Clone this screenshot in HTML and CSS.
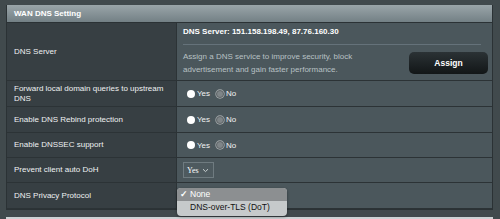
FILE: index.html
```html
<!DOCTYPE html>
<html lang="en">
<head>
  <meta charset="UTF-8">
  <title>WAN DNS Setting</title>
  <link rel="stylesheet" href="styles.css">
</head>
<body>
  <div class="panel">
    <div class="panel-title">WAN DNS Setting</div>

    <div class="row row-dns">
      <div class="label">DNS Server</div>
      <div class="value">
        <div class="dns-current">DNS Server: 151.158.198.49, 87.76.160.30</div>
        <div class="divider"></div>
        <div class="assign-line">
          <p class="hint">Assign a DNS service to improve security, block advertisement and gain faster performance.</p>
          <button class="btn-assign">Assign</button>
        </div>
      </div>
    </div>

    <div class="row">
      <div class="label">Forward local domain queries to upstream DNS</div>
      <div class="value radios">
        <span class="radio"></span><span class="opt">Yes</span>
        <span class="radio checked"></span><span class="opt">No</span>
      </div>
    </div>

    <div class="row">
      <div class="label">Enable DNS Rebind protection</div>
      <div class="value radios">
        <span class="radio"></span><span class="opt">Yes</span>
        <span class="radio checked"></span><span class="opt">No</span>
      </div>
    </div>

    <div class="row row-short">
      <div class="label">Enable DNSSEC support</div>
      <div class="value radios">
        <span class="radio"></span><span class="opt">Yes</span>
        <span class="radio checked"></span><span class="opt">No</span>
      </div>
    </div>

    <div class="row row-short">
      <div class="label">Prevent client auto DoH</div>
      <div class="value">
        <div class="select">
          <span>Yes</span>
          <svg width="7" height="5" viewBox="0 0 7 5"><path d="M1 1.2 L3.5 3.6 L6 1.2" fill="none" stroke="#d6dcde" stroke-width="0.9"/></svg>
        </div>
      </div>
    </div>

    <div class="row">
      <div class="label">DNS Privacy Protocol</div>
      <div class="value dropdown-holder">
        <ul class="dropdown">
          <li class="active"><span class="tick">&#10003;</span>None</li>
          <li>DNS-over-TLS (DoT)</li>
        </ul>
      </div>
    </div>
  </div>
  <div class="next-panel"></div>
</body>
</html>
```

FILE: styles.css
```css
* {
  margin: 0;
  padding: 0;
  box-sizing: border-box;
}

body {
  font-family: 'Liberation Sans', Arial, sans-serif;
  font-size: 8px;
  background-color: #414a4d;
  color: #ffffff;
  width: 500px;
  height: 219px;
  overflow: hidden;
  padding: 5px 7px 0 6px;
}

.panel {
  width: 487px;
  border: 1px solid #2b3235;
  border-top: none;
}

.panel-title {
  height: 18px;
  padding-left: 7px;
  display: flex;
  align-items: center;
  font-weight: 700;
  background: linear-gradient(#9aa5a9, #738085);
  border-bottom: 1px solid #2b3235;
}

.row {
  display: grid;
  grid-template-columns: 170px 1fr;
  height: 26px;
  border-bottom: 1px solid #2c3336;
}

.row-short {
  height: 25px;
}

.row-dns {
  height: 58px;
}

.label {
  background-color: #373f43;
  border-right: 1px solid #2c3336;
  padding: 0 7px;
  display: flex;
  align-items: center;
  line-height: 10px;
  color: #eef1f2;
}

.value {
  background-color: #4b575c;
  padding: 0 6px;
  display: flex;
  align-items: center;
}

.row-dns .value {
  flex-direction: column;
  align-items: stretch;
  padding: 4px 4px 0 6px;
}

.dns-current {
  font-weight: 700;
  line-height: 10px;
}

.divider {
  height: 1px;
  background-color: #65727a;
  margin: 7px 7px 5px 0;
}

.assign-line {
  display: flex;
  align-items: center;
}

.hint {
  width: 180px;
  line-height: 13px;
  color: #b8c1c4;
}

.btn-assign {
  margin-left: auto;
  width: 79px;
  height: 22px;
  border: none;
  border-radius: 5px;
  background: linear-gradient(#2b3235, #121617);
  color: #ffffff;
  font-family: inherit;
  font-size: 8.5px;
  font-weight: 700;
}

.radios {
  padding-left: 10px;
}

.radio {
  width: 8px;
  height: 8px;
  border-radius: 50%;
  background-color: #ffffff;
  margin-right: 2px;
}

.radio.checked {
  background-color: #7f8588;
  border: 1.5px solid #5d6366;
  box-shadow: 0 0 0 0.7px #a3a9ab;
}

.opt {
  margin-right: 6px;
  color: #f1f3f4;
}

.select {
  width: 31px;
  height: 16px;
  border: 1px solid #6f7b80;
  background-color: #4e5a5f;
  display: flex;
  align-items: center;
  justify-content: space-between;
  padding: 0 4px 0 3px;
  font-family: 'Liberation Serif', 'Times New Roman', serif;
  font-size: 8px;
}

.dropdown-holder {
  position: relative;
}

.dropdown {
  position: absolute;
  left: 0;
  top: 5px;
  width: 110px;
  list-style: none;
  background-color: #c6cacb;
  border-radius: 4px;
  padding: 0 0 2px;
  box-shadow: 0 1px 3px rgba(0, 0, 0, 0.4);
  color: #111111;
  font-size: 8.5px;
  overflow: hidden;
  z-index: 2;
}

.dropdown li {
  height: 13px;
  line-height: 13px;
  padding-left: 13px;
  position: relative;
}

.dropdown li.active {
  background-color: #8c8f91;
  color: #ffffff;
}

.tick {
  position: absolute;
  left: 3px;
  font-size: 9px;
  font-weight: 700;
}

.next-panel {
  margin-top: 7px;
  height: 10px;
  background-color: #cdd3d5;
  width: 487px;
}
```
